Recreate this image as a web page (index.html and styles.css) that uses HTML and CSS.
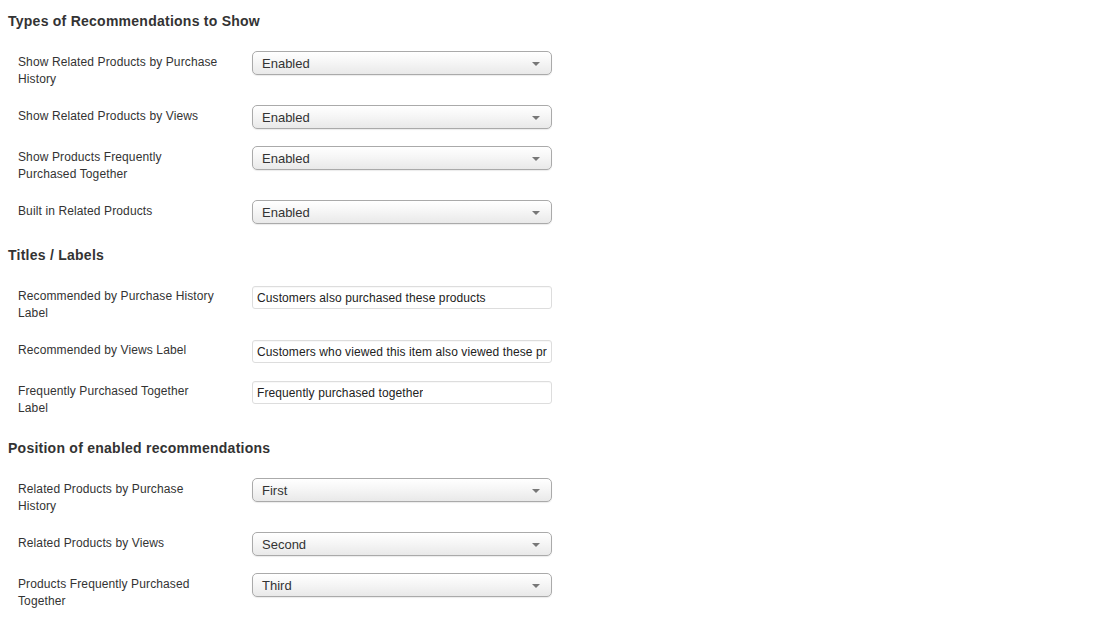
FILE: index.html
```html
<!DOCTYPE html>
<html>
<head>
<meta charset="utf-8">
<link rel="stylesheet" href="styles.css">
</head>
<body>
<div class="page">
  <section class="section">
    <h3 class="heading">Types of Recommendations to Show</h3>
    <div class="row"><div class="label">Show Related Products by Purchase History</div><div class="select"><span>Enabled</span><i class="arrow"></i></div></div>
    <div class="row"><div class="label">Show Related Products by Views</div><div class="select"><span>Enabled</span><i class="arrow"></i></div></div>
    <div class="row"><div class="label">Show Products Frequently Purchased Together</div><div class="select"><span>Enabled</span><i class="arrow"></i></div></div>
    <div class="row"><div class="label">Built in Related Products</div><div class="select"><span>Enabled</span><i class="arrow"></i></div></div>
  </section>
  <section class="section">
    <h3 class="heading">Titles / Labels</h3>
    <div class="row"><div class="label">Recommended by Purchase History Label</div><div class="input"><span>Customers also purchased these products</span></div></div>
    <div class="row"><div class="label">Recommended by Views Label</div><div class="input"><span>Customers who viewed this item also viewed these products</span></div></div>
    <div class="row"><div class="label">Frequently Purchased Together Label</div><div class="input"><span>Frequently purchased together</span></div></div>
  </section>
  <section class="section">
    <h3 class="heading">Position of enabled recommendations</h3>
    <div class="row"><div class="label">Related Products by Purchase History</div><div class="select"><span>First</span><i class="arrow"></i></div></div>
    <div class="row"><div class="label">Related Products by Views</div><div class="select"><span>Second</span><i class="arrow"></i></div></div>
    <div class="row"><div class="label">Products Frequently Purchased Together</div><div class="select"><span>Third</span><i class="arrow"></i></div></div>
  </section>
</div>
</body>
</html>
```
FILE: styles.css
```css
html, body {
  margin: 0;
  padding: 0;
  background: #ffffff;
}
body {
  font-family: "Liberation Sans", Arial, Helvetica, sans-serif;
  color: #333333;
}
.page {
  padding: 11px 0 0 8px;
}
.section {
  display: flex;
  flex-direction: column;
}
.heading {
  margin: 4px 0 20px 0;
  font-size: 14px;
  line-height: 20px;
  font-weight: bold;
  letter-spacing: 0.25px;
  color: #333333;
}
.section:first-child .heading {
  margin-top: 0;
}
.row {
  display: flex;
  align-items: flex-start;
  margin-bottom: 17px;
}
.label {
  flex: none;
  width: 201px;
  padding: 3px 0 0 10px;
  margin-right: 33px;
  font-size: 12px;
  line-height: 17px;
  letter-spacing: 0.12px;
  color: #333333;
}
.select {
  flex: none;
  position: relative;
  width: 300px;
  height: 24px;
  box-sizing: border-box;
  border: 1px solid #aaaaaa;
  border-radius: 5px;
  background: linear-gradient(to bottom, #ffffff 0%, #f6f6f6 45%, #e9e9e9 100%);
  box-shadow: 0 1px 1px rgba(0,0,0,0.08);
  display: flex;
  align-items: center;
  padding-left: 9px;
  font-size: 13px;
  color: #333333;
}
.select .arrow {
  position: absolute;
  right: 11px;
  top: 10px;
  width: 0;
  height: 0;
  border-left: 4px solid transparent;
  border-right: 4px solid transparent;
  border-top: 4px solid #777777;
}
.input {
  flex: none;
  width: 300px;
  height: 23px;
  margin: 1px 0 0 0;
  box-sizing: border-box;
  border: 1px solid #dddddd;
  border-radius: 3px;
  background: #ffffff;
  box-shadow: inset 0 1px 1px rgba(0,0,0,0.03);
  display: flex;
  align-items: center;
  padding: 0 4px;
  font-size: 12px;
  letter-spacing: 0.1px;
  color: #222222;
  overflow: hidden;
  white-space: nowrap;
}
.input span {
  overflow: hidden;
}
```
